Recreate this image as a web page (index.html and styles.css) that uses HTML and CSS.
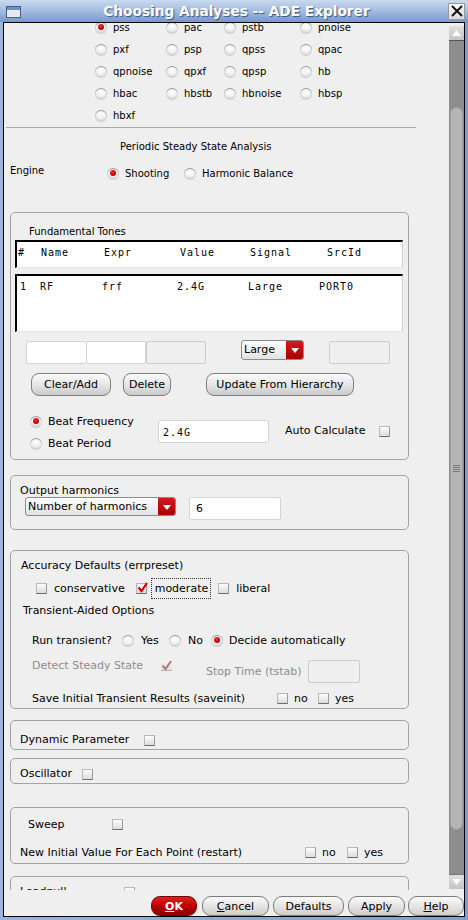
FILE: index.html
```html
<!DOCTYPE html>
<html>
<head>
<meta charset="utf-8">
<link rel="stylesheet" href="styles.css">
</head>
<body>
<div class="window">
  <div class="titlebar">
    <span class="win-icon"></span>
    <span class="title">Choosing Analyses -- ADE Explorer</span>
    <span class="close-btn"><svg width="14" height="14" viewBox="0 0 14 14"><path d="M2 2 L12 12 M12 2 L2 12" stroke="#111" stroke-width="2" fill="none"/></svg></span>
  </div>
  <div class="inner">
    <div class="main">
      <div class="viewport">
        <div class="analyses">
          <label class="opt"><span class="radio on"></span>pss</label>
          <label class="opt"><span class="radio"></span>pac</label>
          <label class="opt"><span class="radio"></span>pstb</label>
          <label class="opt"><span class="radio"></span>pnoise</label>
          <label class="opt"><span class="radio"></span>pxf</label>
          <label class="opt"><span class="radio"></span>psp</label>
          <label class="opt"><span class="radio"></span>qpss</label>
          <label class="opt"><span class="radio"></span>qpac</label>
          <label class="opt"><span class="radio"></span>qpnoise</label>
          <label class="opt"><span class="radio"></span>qpxf</label>
          <label class="opt"><span class="radio"></span>qpsp</label>
          <label class="opt"><span class="radio"></span>hb</label>
          <label class="opt"><span class="radio"></span>hbac</label>
          <label class="opt"><span class="radio"></span>hbstb</label>
          <label class="opt"><span class="radio"></span>hbnoise</label>
          <label class="opt"><span class="radio"></span>hbsp</label>
          <label class="opt"><span class="radio"></span>hbxf</label>
        </div>
        <div class="separator"></div>
        <div class="pss-title">Periodic Steady State Analysis</div>
        <div class="engine">
          <span class="engine-label">Engine</span>
          <div class="engine-opts">
            <label class="opt shoot"><span class="radio on"></span>Shooting</label>
            <label class="opt"><span class="radio"></span>Harmonic Balance</label>
          </div>
        </div>

        <div class="box ft-box">
          <div class="ft-title">Fundamental Tones</div>
          <div class="tbl tbl-head">
            <span class="c1">#</span><span class="c2">Name</span><span class="c3">Expr</span><span class="c4">Value</span><span class="c5">Signal</span><span class="c6">SrcId</span>
          </div>
          <div class="tbl tbl-data">
            <span class="d1">1</span><span class="d2">RF</span><span class="d3">frf</span><span class="d4">2.4G</span><span class="d5">Large</span><span class="d6">PORT0</span>
          </div>
          <div class="inputs-row">
            <span class="field f1"></span>
            <span class="field f2"></span>
            <span class="field f3 disabled"></span>
            <span class="combo combo-large"><span class="combo-text">Large</span><span class="combo-arrow"></span></span>
            <span class="field f4 disabled"></span>
          </div>
          <div class="buttons-row">
            <span class="btn b-clear">Clear/Add</span>
            <span class="btn b-delete">Delete</span>
            <span class="btn b-update">Update From Hierarchy</span>
          </div>
          <div class="beat-row">
            <div class="beat-opts">
              <label class="opt beat"><span class="radio on"></span>Beat Frequency</label>
              <label class="opt beat"><span class="radio"></span>Beat Period</label>
            </div>
            <span class="field beat-field mono">2.4G</span>
            <span class="auto-label">Auto Calculate</span>
            <span class="check auto-check"></span>
          </div>
        </div>

        <div class="box oh-box">
          <div class="box-title oh-title">Output harmonics</div>
          <div class="oh-row">
            <span class="combo combo-harm"><span class="combo-text">Number of harmonics</span><span class="combo-arrow"></span></span>
            <span class="field harm-field">6</span>
          </div>
        </div>

        <div class="box acc-box">
          <div class="box-title acc-title">Accuracy Defaults (errpreset)</div>
          <div class="acc-row">
            <span class="check c-cons"></span><span class="acc-lbl">conservative</span>
            <span class="check checked c-mod"><svg width="11" height="11" viewBox="0 0 11 11"><path d="M1.5 5.5 L4.5 9 L10 1" stroke="#d10000" stroke-width="2.2" fill="none"/></svg></span><span class="focus">moderate</span>
            <span class="check c-lib"></span><span class="acc-lbl">liberal</span>
          </div>
          <div class="tao-title">Transient-Aided Options</div>
          <div class="run-row">
            <span class="run-label">Run transient?</span>
            <label class="opt o-yes"><span class="radio"></span>Yes</label>
            <label class="opt o-no"><span class="radio"></span>No</label>
            <label class="opt"><span class="radio on"></span>Decide automatically</label>
          </div>
          <div class="detect-row">
            <span class="detect-label dis">Detect Steady State</span>
            <span class="dis-check"><svg width="11" height="11" viewBox="0 0 11 11"><path d="M1.5 5.5 L4.5 9 L10 1" stroke="#b07a7a" stroke-width="2" fill="none"/></svg></span>
            <span class="stop-label dis">Stop Time (tstab)</span>
            <span class="field stop-field disabled"></span>
          </div>
          <div class="save-row">
            <span class="save-label">Save Initial Transient Results (saveinit)</span>
            <span class="check"></span><span class="yn-lbl yn-no">no</span>
            <span class="check"></span><span class="yn-lbl">yes</span>
          </div>
        </div>

        <div class="box dyn-box">
          <span class="dyn-label">Dynamic Parameter</span><span class="check"></span>
        </div>

        <div class="box osc-box">
          <span class="osc-label">Oscillator</span><span class="check"></span>
        </div>

        <div class="box sweep-box">
          <div class="sweep-row"><span class="sweep-label">Sweep</span><span class="check"></span></div>
          <div class="restart-row">
            <span class="restart-label">New Initial Value For Each Point (restart)</span>
            <span class="check"></span><span class="yn-lbl yn-no2">no</span>
            <span class="check"></span><span class="yn-lbl">yes</span>
          </div>
        </div>

        <div class="box lp-box">
          <span class="lp-label">Loadpull</span><span class="check"></span>
        </div>
      </div>
      <div class="scrollbar">
        <span class="sb-btn sb-up"><svg width="9" height="6" viewBox="0 0 9 6"><path d="M0 6 L4.5 0 L9 6 Z" fill="#fff"/></svg></span>
        <div class="sb-track">
          <div class="sb-thumb"><span class="grip"></span></div>
        </div>
        <span class="sb-btn sb-down"><svg width="9" height="6" viewBox="0 0 9 6"><path d="M0 0 L4.5 6 L9 0 Z" fill="#fff"/></svg></span>
      </div>
    </div>
    <div class="button-bar">
      <span class="dbtn ok"><u>O</u>K</span>
      <span class="dbtn cancel"><u>C</u>ancel</span>
      <span class="dbtn defaults">Defaults</span>
      <span class="dbtn apply">Apply</span>
      <span class="dbtn help"><u>H</u>elp</span>
    </div>
  </div>
</div>
</body>
</html>
```

FILE: styles.css
```css
* { box-sizing: border-box; }
html, body { margin: 0; padding: 0; }
body {
  width: 468px; height: 920px; overflow: hidden;
  font-family: "DejaVu Sans", sans-serif;
  font-size: 10px; color: #000;
}
.window {
  width: 468px; height: 920px;
  display: flex; flex-direction: column;
  background: linear-gradient(90deg, #9ab4de, #7f9fd2);
}
.titlebar {
  height: 22px; flex: none;
  display: flex; align-items: center;
  background: linear-gradient(#c9d9ef 0%, #a6bfe3 45%, #7898cb 100%);
  padding: 0 3px 0 6px;
}
.win-icon {
  width: 15px; height: 12px;
  border: 1px solid #47608a;
  background: linear-gradient(#6f8fc0 0 3px, #e6e9ee 3px);
  margin-top: 1px;
}
.title {
  flex: 1; text-align: center;
  color: #fff; font-weight: bold; font-size: 13.7px;
  text-shadow: 1px 1px 1px #3c5783;
  padding-left: 4px;
}
.close-btn {
  width: 17px; height: 17px;
  border: 1px solid #9a9a9a;
  background: linear-gradient(#fafafa, #d9d9d9);
  display: flex; align-items: center; justify-content: center;
}
.inner {
  flex: 1;
  margin: 0 3px 3px 3px;
  border: 1px solid #000;
  background: #efefef;
  display: flex; flex-direction: column;
  min-height: 0;
}
.main { height: 867px; display: flex; flex: none; }
.viewport { flex: 1; overflow: hidden; min-width: 0; }

/* radios & checks */
.opt { display: flex; align-items: center; line-height: 14px; white-space: nowrap; }
.radio {
  width: 12px; height: 12px; border-radius: 50%; flex: none;
  background: radial-gradient(circle at 50% 30%, #ffffff 0%, #f1f1f1 45%, #c9c9c9 80%, #8e8e8e 100%);
  box-shadow: 0 1px 0 #9a9a9a inset;
  margin-right: 6px;
  position: relative;
}
.radio.on::after {
  content: ""; position: absolute; left: 3px; top: 2px;
  width: 6px; height: 6px; border-radius: 50%;
  background: radial-gradient(circle at 40% 35%, #ff3030, #c80000 60%, #8a0000);
}
.check {
  width: 11px; height: 11px; flex: none; display: inline-block;
  border: 1px solid #b9b9b9; border-bottom-color: #6d6d6d; border-right-color: #9a9a9a;
  background: linear-gradient(#fdfdfd, #dcdcdc);
  position: relative;
}
.check.checked svg { position: absolute; left: 0; top: -2px; }

/* analyses grid */
.analyses {
  display: grid;
  grid-template-columns: 71px 58px 76px auto;
  grid-auto-rows: 22px;
  align-items: center;
  margin-top: -6px;
  padding-left: 91px;
}
.separator { margin-left: 2px; width: 410px; height: 1px; background: #ababab; }
.pss-title { margin-top: 12px; line-height: 14px; padding-left: 116px; }
.engine { display: flex; height: 24px; margin-top: 8px; }
.engine-label { width: 103px; padding-left: 6px; padding-top: 2px; line-height: 14px; }
.engine-opts { display: flex; padding-top: 5px; height: 19px; }
.engine-opts .opt { height: 14px; }
.shoot { width: 77px; }

/* boxes */
.box {
  margin-left: 6px; width: 399px;
  border: 1px solid #a3a3a3;
  border-radius: 5px;
}
.ft-box { margin-top: 26px; padding-bottom: 4px; }
.ft-title { padding: 12px 0 0 18px; line-height: 14px; }
.tbl {
  margin-left: 4px; width: 388px;
  background: #fff;
  border-top: 2px solid #000; border-left: 2px solid #000;
  border-right: 1px solid #cfcfcf; border-bottom: 1px solid #e8e8e8;
  display: flex;
  font-family: "DejaVu Sans Mono", monospace; font-size: 10px; letter-spacing: 1px;
  line-height: 12px;
}
.tbl-head { margin-top: 1px; height: 28px; padding-top: 5px; padding-left: 1px; }
.tbl-data { margin-top: 6px; height: 58px; padding-top: 5px; padding-left: 3px; }
.c1 { width: 23px; } .c2 { width: 63px; } .c3 { width: 76px; } .c4 { width: 70px; } .c5 { width: 77px; }
.d1 { width: 20px; } .d2 { width: 62px; } .d3 { width: 75px; } .d4 { width: 71px; } .d5 { width: 71px; }

.field {
  display: block; height: 23px; background: #fff;
  border: 1px solid #d4d4d4; border-radius: 2px;
}
.field.disabled { background: #efefef; border-color: #cdcdcd; }
.inputs-row { display: flex; margin-top: 8px; height: 24px; padding-left: 15px; align-items: flex-start; }
.f1 { width: 60px; margin-top: 1px; border-right: none; }
.f2 { width: 60px; margin-top: 1px; }
.f3 { width: 60px; margin-top: 1px; }
.f4 { width: 61px; margin-left: 25px; margin-top: 1px; }

.combo {
  display: flex; height: 20px;
  border: 1px solid #8a8a8a; border-radius: 3px;
  background: linear-gradient(#ffffff, #e2e2e2);
  overflow: hidden;
  line-height: 18px;
}
.combo-text { flex: 1; padding-left: 2px; font-size: 11px; white-space: nowrap; }
.combo-arrow {
  width: 17px; flex: none; position: relative;
  background: linear-gradient(#d81818, #a80000);
}
.combo-arrow::after {
  content: ""; position: absolute; left: 5px; top: 7px;
  border-left: 4px solid transparent; border-right: 4px solid transparent;
  border-top: 5px solid #fff;
}
.combo-large { width: 63px; margin-left: 35px; }

.buttons-row { display: flex; margin-top: 9px; padding-left: 20px; }
.btn {
  display: flex; align-items: center; justify-content: center;
  height: 23px; border: 1px solid #7f7f7f; border-radius: 8px;
  background: linear-gradient(#fbfbfb, #e4e4e4 55%, #c9c9c9);
  font-size: 11px; white-space: nowrap;
}
.b-clear { width: 80px; }
.b-delete { width: 48px; margin-left: 12px; }
.b-update { width: 148px; margin-left: 35px; }

.beat-row { display: flex; margin-top: 15px; }
.beat-opts { width: 147px; padding-left: 19px; }
.beat { height: 22px; font-size: 11px; }
.beat-field {
  width: 111px; margin-top: 9px; padding: 6px 0 0 4px;
  font-family: "DejaVu Sans Mono", monospace; letter-spacing: 1px; line-height: 12px;
}
.auto-label { margin-left: 16px; padding-top: 13px; line-height: 14px; font-size: 11px; }
.auto-check { margin-left: 14px; margin-top: 15px; }

.box-title { line-height: 14px; }
.oh-box { margin-top: 15px; padding: 8px 0 9px 9px; }
.oh-title { line-height: 13px; font-size: 11px; }
.oh-row { display: flex; padding-left: 5px; align-items: flex-start; }
.combo-harm { width: 151px; height: 19px; line-height: 17px; }
.harm-field { width: 92px; margin-left: 13px; padding: 5px 0 0 6px; line-height: 12px; font-size: 11px; }

.acc-box { margin-top: 20px; padding: 8px 0 3px 10px; font-size: 11px; }
.acc-row { display: flex; align-items: center; height: 21px; margin-top: 5px; padding-left: 15px; }
.acc-lbl { margin-left: 7px; }
.c-mod { margin-left: 11px; }
.focus { margin-left: 4px; border: 1px dotted #333; height: 21px; line-height: 19px; padding: 0 2px 0 3px; }
.c-lib { margin-left: 7px; }
.tao-title { margin-top: 5px; line-height: 14px; padding-left: 2px; }
.run-row { display: flex; margin-top: 16px; padding-left: 11px; height: 14px; }
.run-label { width: 90px; line-height: 14px; }
.o-yes { width: 47px; }
.o-no { width: 42px; }
.o-yes .radio, .o-no .radio { margin-right: 7px; }
.detect-row { display: flex; margin-top: 11px; padding-left: 11px; align-items: flex-start; }
.dis { color: #8d8d8d; }
.detect-label { width: 129px; line-height: 14px; }
.dis-check {
  width: 11px; height: 11px; margin-top: 1px;
  background: linear-gradient(#f4f4f4, #e2e2e2);
  border-bottom: 1px solid #b8b8b8;
  display: flex; align-items: center; justify-content: center;
}
.stop-label { margin-left: 34px; padding-top: 6px; line-height: 14px; width: 102px; }
.stop-field { width: 52px; margin-top: 1px; }
.save-row { display: flex; align-items: center; margin-top: 8px; padding-left: 11px; height: 14px; }
.save-label { width: 245px; }
.yn-lbl { margin-left: 6px; }
.yn-no { width: 24px; }

.dyn-box { margin-top: 11px; padding: 12px 0 2px 9px; display: flex; align-items: center; font-size: 11px; line-height: 14px; }
.dyn-label { width: 124px; }
.osc-box { margin-top: 8px; padding: 8px 0 2px 9px; display: flex; align-items: center; font-size: 11px; line-height: 14px; }
.osc-label { width: 62px; }
.sweep-box { margin-top: 23px; padding: 9px 0 4px 9px; font-size: 11px; }
.sweep-row { display: flex; align-items: center; height: 14px; padding-left: 8px; }
.sweep-label { width: 84px; }
.restart-row { display: flex; align-items: center; height: 14px; margin-top: 14px; }
.restart-label { width: 285px; }
.yn-no2 { width: 25px; }
.lp-box { margin-top: 12px; padding: 8px 0 4px 9px; display: flex; align-items: center; font-size: 11px; line-height: 14px; }
.lp-label { width: 104px; }

/* scrollbar */
.scrollbar { width: 15px; flex: none; display: flex; flex-direction: column; padding-top: 3px; }
.sb-btn {
  height: 15px; flex: none;
  display: flex; align-items: center; justify-content: center;
  background: linear-gradient(#e0e0e0, #c4c4c4);
}
.sb-up { border-bottom: 1px solid #555; }
.sb-down { border-top: 1px solid #777; margin-bottom: 1px; }
.sb-track { flex: 1; background: #8d8d8d; padding-top: 66px; }
.sb-thumb {
  margin-left: 1px; width: 13px; height: 723px;
  background: #b5b5b5; border-radius: 7px;
  border: 1px solid #9f9f9f;
  display: flex; align-items: center; justify-content: center;
}
.grip {
  width: 7px; height: 7px;
  background: repeating-linear-gradient(#7a7a7a 0 1px, transparent 1px 2px);
}

/* dialog buttons */
.button-bar { flex: 1; display: flex; align-items: flex-end; padding: 0 0 0 143px; }
.dbtn {
  height: 20px; display: flex; align-items: center; justify-content: center;
  border: 1px solid #7d7d7d; border-radius: 9px;
  background: linear-gradient(#fbfbfb, #e5e5e5 50%, #cdcdcd);
  font-size: 11px; margin-left: 5px;
}
.dbtn u { text-decoration: underline; }
.ok {
  width: 46px; margin-left: 4px;
  background: linear-gradient(#e02020, #b80000 55%, #8a0000);
  color: #fff; font-weight: bold; border-color: #700;
}
.cancel { width: 67px; }
.defaults { width: 71px; margin-left: 4px; }
.apply { width: 57px; margin-left: 4px; }
.help { width: 56px; margin-left: 3px; }
```
